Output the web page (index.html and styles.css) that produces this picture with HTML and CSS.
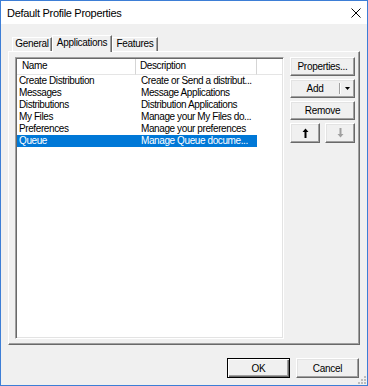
FILE: index.html
```html
<!DOCTYPE html>
<html>
<head>
<meta charset="utf-8">
<link rel="stylesheet" href="styles.css">
</head>
<body>
<div class="window">
  <div class="titlebar">
    <span class="title">Default Profile Properties</span>
    <svg class="close" width="10" height="10" viewBox="0 0 10 10"><path d="M0.5 0.5L9.5 9.5M9.5 0.5L0.5 9.5" stroke="#000" stroke-width="1" fill="none"/></svg>
  </div>
  <div class="body">
    <div class="tabs">
      <div class="tab t-general">General</div>
      <div class="tab t-apps active">Applications</div>
      <div class="tab t-features">Features</div>
    </div>
    <div class="panel">
      <div class="list">
        <div class="header">
          <div class="hcell c-name hname">Name</div>
          <div class="hcell c-desc">Description</div>
          <div class="hcell c-fill"></div>
        </div>
        <div class="row"><div class="cell c-name">Create Distribution</div><div class="cell c-desc">Create or Send a distribut...</div></div>
        <div class="row"><div class="cell c-name">Messages</div><div class="cell c-desc">Message Applications</div></div>
        <div class="row"><div class="cell c-name">Distributions</div><div class="cell c-desc">Distribution Applications</div></div>
        <div class="row"><div class="cell c-name">My Files</div><div class="cell c-desc">Manage your My Files do...</div></div>
        <div class="row"><div class="cell c-name">Preferences</div><div class="cell c-desc">Manage your preferences</div></div>
        <div class="row sel"><div class="cell c-name">Queue</div><div class="cell c-desc">Manage Queue docume...</div></div>
      </div>
      <div class="side">
        <div class="btn sbtn">Properties...</div>
        <div class="btn sbtn split">
          <span class="split-main">Add</span>
          <span class="split-div"></span>
          <span class="split-arrow"><svg width="5" height="3" viewBox="0 0 5 3"><path d="M0 0H5L2.5 3Z" fill="#000"/></svg></span>
        </div>
        <div class="btn sbtn">Remove</div>
        <div class="arrows">
          <div class="btn abtn"><svg width="7" height="10" viewBox="0 0 7 10"><path d="M3.5 0.5L0.5 4H2.5V10H4.5V4H6.5Z" fill="#000"/></svg></div>
          <div class="btn abtn"><svg width="7" height="10" viewBox="0 0 7 10"><path d="M3.5 9.5L0.5 6H2.5V0H4.5V6H6.5Z" fill="#a0a0a0"/></svg></div>
        </div>
      </div>
    </div>
    <div class="footer">
      <div class="btn fbtn default">OK</div>
      <div class="btn fbtn">Cancel</div>
    </div>
  </div>
  <svg class="grip" width="11" height="11" viewBox="0 0 11 11">
    <rect x="8" y="2" width="2" height="2" fill="#bcbcbc"/>
    <rect x="5" y="5" width="2" height="2" fill="#bcbcbc"/>
    <rect x="8" y="5" width="2" height="2" fill="#bcbcbc"/>
    <rect x="2" y="8" width="2" height="2" fill="#bcbcbc"/>
    <rect x="5" y="8" width="2" height="2" fill="#bcbcbc"/>
    <rect x="8" y="8" width="2" height="2" fill="#bcbcbc"/>
  </svg>
</div>
</body>
</html>
```
FILE: styles.css
```css
* { box-sizing: border-box; }
html, body { margin: 0; padding: 0; background: #fff; }
body {
  font-family: "Liberation Sans", Arial, sans-serif;
  font-size: 10px;
  color: #000;
}
.window {
  position: relative;
  width: 368px;
  height: 386px;
  border: 1px solid #3d7ed6;
  display: flex;
  flex-direction: column;
  background: #f0f0f0;
}
.titlebar {
  height: 23px;
  background: #fff;
  display: flex;
  align-items: center;
  justify-content: space-between;
  padding: 0 6px 0 6px;
}
.title {
  font-size: 11px;
  letter-spacing: -0.3px;
  color: #000;
}
.body {
  flex: 1;
  background: #f0f0f0;
  padding: 11px 7px 0 7px;
  display: flex;
  flex-direction: column;
}
.tabs {
  height: 16px;
  display: flex;
  align-items: flex-end;
  padding-left: 4px;
}
.tab {
  height: 14px;
  background: #f0f0f0;
  border: 1px solid;
  border-bottom: none;
  border-color: #fff #696969 #696969 #fff;
  box-shadow: inset -1px 0 #a0a0a0;
  letter-spacing: -0.3px;
  line-height: 12px;
  text-align: center;
  white-space: nowrap;
}
.t-general { width: 40px; }
.t-apps { width: 60px; }
.t-features { width: 46px; }
.tab.active {
  height: 17px;
  margin-bottom: -1px;
  position: relative;
  z-index: 1;
  line-height: 13px;
}
.panel {
  height: 294px;
  border: 1px solid;
  border-color: #fff #696969 #696969 #fff;
  box-shadow: inset -1px -1px #a0a0a0;
  padding: 5px 4px 5px 6px;
  display: flex;
  gap: 6px;
}
.list {
  width: 269px;
  height: 282px;
  background: #fff;
  border: 1px solid;
  border-color: #a0a0a0 #fff #fff #a0a0a0;
  box-shadow: inset 1px 1px #696969, inset -1px -1px #e3e3e3;
  padding: 1px;
  letter-spacing: -0.4px;
}
.header {
  display: flex;
  height: 16px;
}
.hcell {
  height: 16px;
  line-height: 14px;
  background: #fff;
  border-right: 1px solid #d5d5d5;
  border-bottom: 1px solid #e5e5e5;
  padding-left: 4px;
  white-space: nowrap;
  overflow: hidden;
}
.hname { padding-left: 5px; }
.c-name { width: 119px; }
.c-desc { width: 121px; }
.c-fill { flex: 1; border-right: none; }
.row {
  display: flex;
  width: 240px;
  height: 12px;
  line-height: 12px;
}
.cell {
  white-space: nowrap;
  overflow: hidden;
}
.row .c-name { padding-left: 2px; }
.row .c-desc { padding-left: 5px; }
.row.sel {
  background: #0078d7;
  color: #fff;
}
.side {
  width: 65px;
  display: flex;
  flex-direction: column;
  gap: 3px;
}
.btn {
  background: #f0f0f0;
  border: 1px solid;
  border-color: #fff #696969 #696969 #fff;
  box-shadow: inset -1px -1px #a0a0a0, inset 1px 1px #e3e3e3;
  display: flex;
  align-items: center;
  justify-content: center;
  letter-spacing: -0.3px;
  white-space: nowrap;
}
.sbtn { height: 19px; }
.split { justify-content: flex-start; padding: 0; }
.split-main { width: 48px; text-align: center; }
.split-div {
  width: 1px;
  height: 11px;
  background: #a0a0a0;
  box-shadow: 1px 0 #fff;
}
.split-arrow {
  flex: 1;
  display: flex;
  justify-content: center;
  align-items: center;
}
.arrows {
  display: flex;
  gap: 5px;
}
.abtn { width: 30px; height: 20px; }
.footer {
  margin-top: 13px;
  display: flex;
  justify-content: flex-end;
  gap: 6px;
  padding-right: 1px;
}
.fbtn { width: 63px; height: 20px; }
.fbtn.default {
  border: 1px solid #000;
  box-shadow: inset 1px 1px #fff, inset -1px -1px #696969, inset -2px -2px #a0a0a0;
}
.grip {
  position: absolute;
  right: 0;
  bottom: 0;
}
```
